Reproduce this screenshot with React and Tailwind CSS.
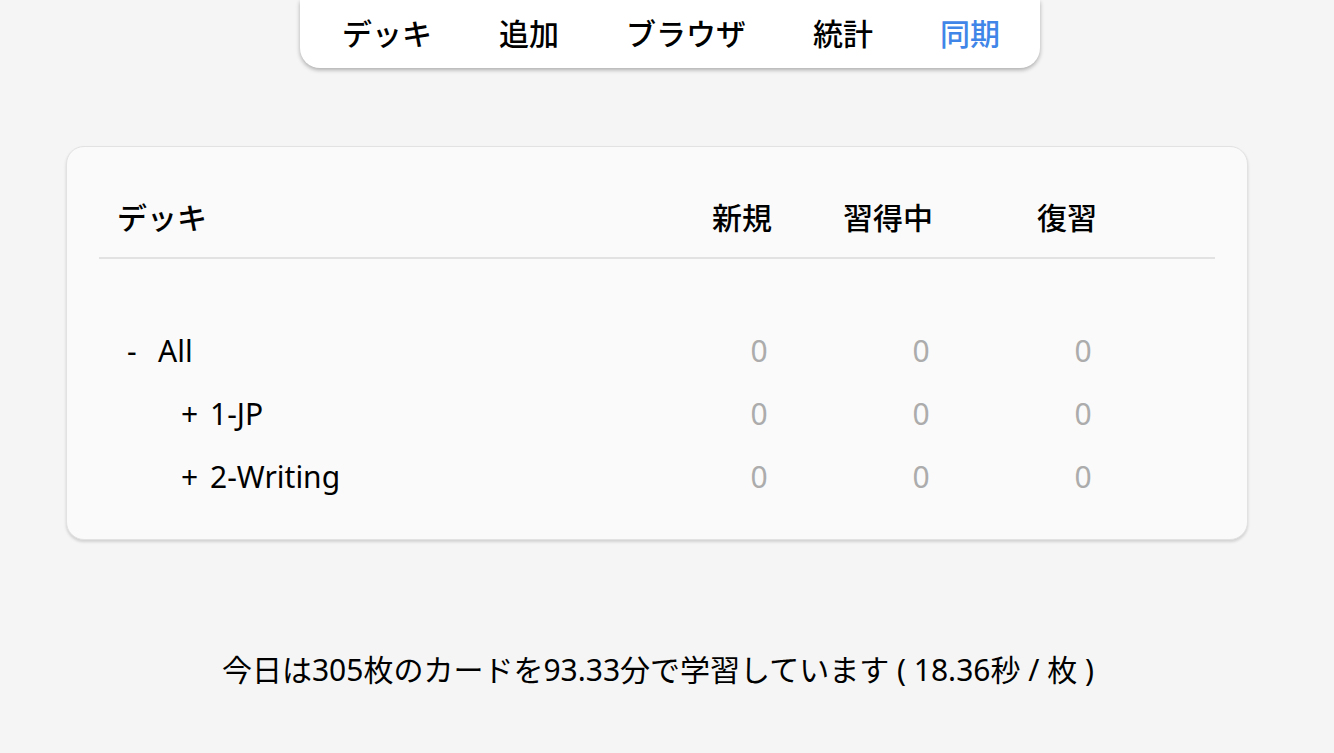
import React from 'react';

const navItems = ['デッキ', '追加', 'ブラウザ', '統計', '同期'];

const decks = [
  { mark: '-', name: 'All', indent: false },
  { mark: '+', name: '1-JP', indent: true },
  { mark: '+', name: '2-Writing', indent: true },
];

export default function App() {
  return (
    <div
      className="min-h-[753px] bg-[#f5f5f5] text-black"
      style={{ fontFamily: '"Noto Sans", "Noto Sans CJK JP", sans-serif' }}
    >
      {/* top nav */}
      <div className="flex justify-center pl-[6px]">
        <nav className="w-[740px] h-[68px] bg-white rounded-b-[20px] shadow-[0_2px_4px_rgba(0,0,0,0.3)] flex items-center pl-[42px] gap-[67px]">
          {navItems.map((item) => (
            <span
              key={item}
              className={`text-[30px] font-medium leading-none ${item === '同期' ? 'text-[#3f86e8]' : 'text-black'}`}
            >
              {item}
            </span>
          ))}
        </nav>
      </div>

      {/* deck table */}
      <div className="mt-[78px] mx-[66px] w-[1182px] bg-[#fafafa] border border-[#e2e2e2] rounded-[18px] shadow-[0_2px_3px_rgba(0,0,0,0.15)] px-[32px] pt-[51px] pb-[31px]">
        <div className="grid grid-cols-[579px_162px_162px_162px_1fr] h-[40px] items-center text-[30px] font-medium leading-[40px] pb-[19px] box-content border-b-2 border-[#e2e2e2]">
          <span className="pl-[18px]">デッキ</span>
          <span className="pl-[34px]">新規</span>
          <span className="pl-[3px]">習得中</span>
          <span className="pl-[35px]">復習</span>
          <span />
        </div>
        <div className="pt-[60px]">
          {decks.map((d) => (
            <div
              key={d.name}
              className="grid grid-cols-[579px_162px_162px_162px_1fr] h-[63px] items-center text-[30px]"
            >
              <span className={`flex ${d.indent ? 'pl-[82px]' : 'pl-[28px]'}`}>
                <span className={d.indent ? 'w-[29px]' : 'w-[31px]'}>{d.mark}</span>
                <span>{d.name}</span>
              </span>
              <span className="text-center text-[#acacac]">0</span>
              <span className="text-center text-[#acacac]">0</span>
              <span className="text-center text-[#acacac]">0</span>
              <span />
            </div>
          ))}
        </div>
      </div>

      {/* footer stats */}
      <p className="mt-[110px] text-center text-[30px] leading-[40px] pr-[18px]">
        今日は305枚のカードを93.33分で学習しています ( 18.36秒 / 枚 )
      </p>
    </div>
  );
}
